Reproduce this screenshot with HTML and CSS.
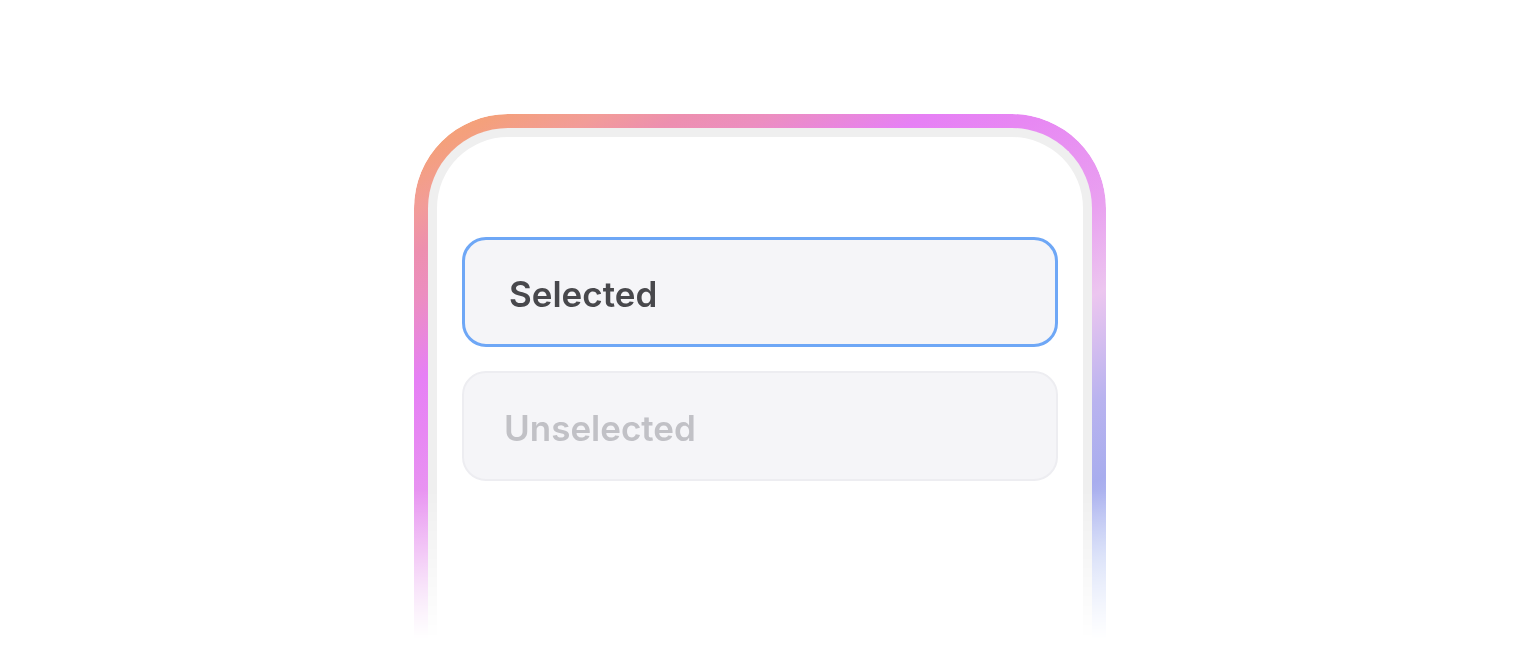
FILE: index.html
```html
<!DOCTYPE html>
<html lang="en">
<head>
<meta charset="utf-8">
<title>Selection</title>
<link rel="stylesheet" href="styles.css">
</head>
<body>
  <main class="stage">
    <div class="phone">
      <div class="screen">
        <div class="option option--selected">Selected</div>
        <div class="option option--unselected">Unselected</div>
      </div>
    </div>
  </main>
</body>
</html>
```

FILE: styles.css
```css
html, body {
  margin: 0;
  padding: 0;
  background: #ffffff;
  height: 100%;
  overflow: hidden;
}

.stage {
  display: flex;
  justify-content: center;
  padding-top: 114px;
  height: 650px;
  box-sizing: border-box;
}

.phone {
  width: 692px;
  height: 536px;
  box-sizing: border-box;
  padding: 14px 14px 0 14px;
  border-radius: 94px 94px 0 0;
  background: linear-gradient(152.7deg,
    #f6a472 0%,
    #f4a07c 5%,
    #f29c98 10.8%,
    #ed8faf 15.6%,
    #ec8ec0 20.8%,
    #e680f5 29.8%,
    #e787f3 36%,
    #e9a0f0 49.6%,
    #ecc6ef 59.6%,
    #b9b3ef 71.6%,
    #a8adee 80.5%,
    #c0ccf4 89.5%,
    #d2def8 100%);
  -webkit-mask-image: linear-gradient(to bottom, #000 70%, rgba(0,0,0,0.35) 88%, transparent 98%);
  mask-image: linear-gradient(to bottom, #000 70%, rgba(0,0,0,0.35) 88%, transparent 98%);
}

.screen {
  height: 100%;
  box-sizing: border-box;
  background: #ffffff;
  border: 9px solid #efefef;
  border-bottom: none;
  border-radius: 80px 80px 0 0;
  padding: 100px 25px 0 25px;
  display: flex;
  flex-direction: column;
  gap: 24px;
}

.option {
  height: 110px;
  box-sizing: border-box;
  border-radius: 24px;
  background: #f5f5f8;
  display: flex;
  align-items: center;
  padding-top: 4px;
  font-family: Inter, "Liberation Sans", sans-serif;
  font-weight: 600;
  font-size: 35px;
  letter-spacing: 0;
}

.option--selected {
  border: 3px solid #6ea7f6;
  padding-left: 44px;
  color: #48484c;
}

.option--unselected {
  border: 2px solid #ededf1;
  padding-left: 40px;
  color: #c1c1c6;
}
```
